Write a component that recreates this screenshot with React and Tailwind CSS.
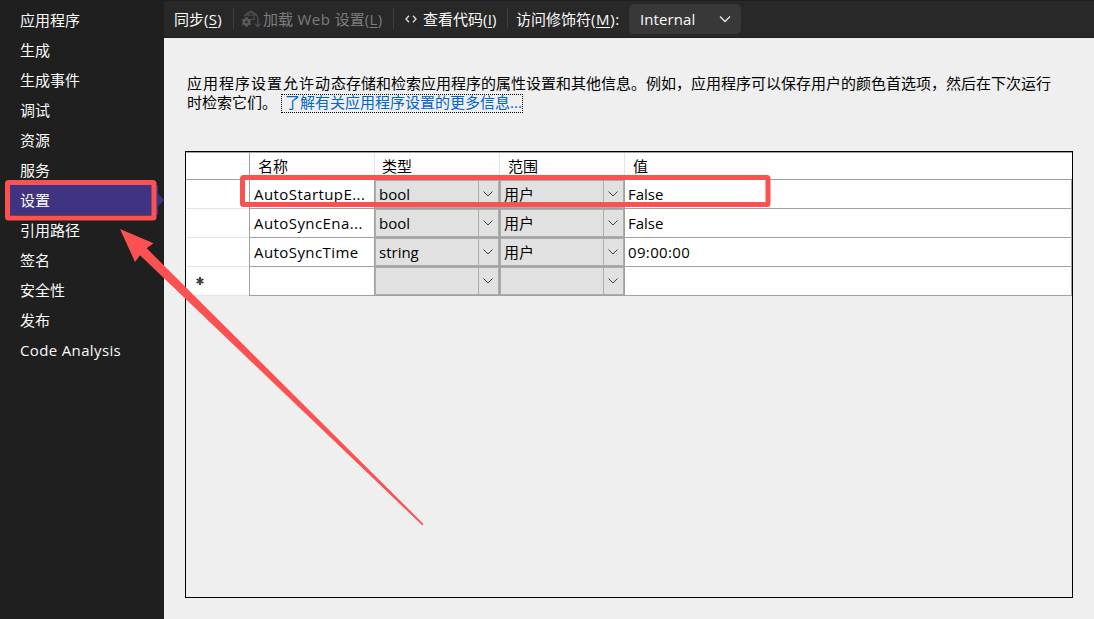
import React, { useState } from "react";

const menuItems = [
  "应用程序",
  "生成",
  "生成事件",
  "调试",
  "资源",
  "服务",
  "设置",
  "引用路径",
  "签名",
  "安全性",
  "发布",
  "Code Analysis",
];

const settings = [
  { name: "AutoStartupE...", type: "bool", scope: "用户", value: "False" },
  { name: "AutoSyncEna...", type: "bool", scope: "用户", value: "False" },
  { name: "AutoSyncTime", type: "string", scope: "用户", value: "09:00:00" },
  { name: "", type: "", scope: "", value: "", isNew: true },
];

const Sidebar = ({ active, onSelect }) => (
  <nav className="w-[164px] shrink-0 bg-[#1f1f1f] pt-[5px] pl-[6px] text-[#fafafa]">
    {menuItems.map((item) => (
      <div
        key={item}
        onClick={() => onSelect(item)}
        className="flex h-[30px] cursor-default items-center"
      >
        <div
          className={`flex h-[30px] w-[152px] items-center pl-[14px] ${
            item === active ? "bg-[#403482]" : ""
          } ${item === "Code Analysis" ? "tracking-[0.36px]" : ""}`}
        >
          {item}
        </div>
        {item === active && (
          <svg width="6" height="12" viewBox="0 0 6 12">
            <path d="M0 0L6 6L0 12Z" fill="#403482" />
          </svg>
        )}
      </div>
    ))}
  </nav>
);

const Separator = () => <div className="h-[21px] w-px shrink-0 bg-[#3d3d3d]" />;

// Globe with a gear in front and a download arrow
const WebSettingsIcon = () => (
  <svg width="20" height="18" viewBox="0 0 20 18" fill="none" stroke="#505050" strokeWidth="1.1">
    <path d="M3.500 6.500A7 7 0 0 1 16.500 7" />
    <path d="M7 6.500C7.300 3.500 8.500 1 10 1S13 3.500 13.200 9M3.500 5H16.500M10 9.500H14" />
    <g stroke="#5c5c5c">
      <circle cx="5.500" cy="12" r="2.600" strokeWidth="2.400" />
      <path
        d="M5.500 7V9M5.500 15V17M1.200 9.500L2.900 10.500M8.100 13.500L9.800 14.500M9.800 9.500L8.100 10.500M2.900 13.500L1.200 14.500"
        strokeWidth="2"
      />
    </g>
    <path d="M16.800 7.500V16.500M14 13.800L16.800 16.600L19.500 13.800" strokeWidth="1.300" />
  </svg>
);

const Toolbar = () => (
  <div className="flex h-[38px] shrink-0 items-center border-t border-b border-[#1f1f1f] bg-[#282828] pb-px text-[#fafafa]">
    <div className="w-[69px] pl-[10px] whitespace-nowrap">
      同步<span className="tracking-[0.3px]">(<u className="underline-offset-2">S</u>)</span>
    </div>
    <Separator />
    <div className="flex w-[159px] items-center pl-[7px] whitespace-nowrap text-[#7d7d7d]">
      <WebSettingsIcon />
      <span className="pl-[2px]">
        加载<span className="tracking-[0.5px]"> Web </span>设置
        <span className="tracking-[0.3px]">(<u className="underline-offset-2">L</u>)</span>
      </span>
    </div>
    <Separator />
    <div className="flex w-[113px] items-center pl-[11px] whitespace-nowrap">
      <svg width="12" height="8" viewBox="0 0 12 8" fill="none" stroke="#d6d6d6" strokeWidth="1.400">
        <path d="M4 0.700L1 4L4 7.300M8 0.700L11 4L8 7.300" />
      </svg>
      <span className="pl-[6px]">
        查看代码<span className="tracking-[0.2px]">(<u className="underline-offset-2">I</u>)</span>
      </span>
    </div>
    <Separator />
    <div className="w-[121px] pl-2 whitespace-nowrap">
      访问修饰符<span className="tracking-[0.6px]">(<u className="underline-offset-2">M</u>):</span>
    </div>
    <div className="flex h-[30px] w-[112px] items-center justify-between rounded-[5px] bg-[#383838] pr-[10px] pl-[11px]">
      <span className="tracking-[0.1px]">Internal</span>
      <svg width="12" height="8" viewBox="0 0 12 8" fill="none" stroke="#e8e8e8" strokeWidth="1.300">
        <path d="M1 1.500L6 6.500L11 1.500" />
      </svg>
    </div>
  </div>
);

const ComboCell = ({ value }) => (
  <div className="flex h-[29px] w-[125px] shrink-0 border-r border-b border-[#a0a0a0]">
    <div className="flex w-[124px] border border-[#adadad] bg-[#e1e1e1]">
      <div className="flex flex-1 items-center pl-[3px]">{value}</div>
      <div className="flex w-5 items-center border-l border-[#adadad] pl-1">
        <svg width="10" height="6" viewBox="0 0 10 6" fill="none" stroke="#404040" strokeWidth="1">
          <path d="M0.500 0.500L5 5L9.500 0.500" />
        </svg>
      </div>
    </div>
  </div>
);

const SettingsGrid = () => (
  <div className="h-[447px] w-[888px] border border-black">
    {/* Header row */}
    <div className="flex h-7 border-t border-b border-[#a0a0a0] bg-white">
      <div className="w-[64px] border-r border-[#a0a0a0]" />
      <div className="flex w-[125px] items-center border-r border-[#e5e5e5] pl-2">名称</div>
      <div className="flex w-[125px] items-center border-r border-[#e5e5e5] pl-[7px]">类型</div>
      <div className="flex w-[125px] items-center border-r border-[#e5e5e5] pl-2">范围</div>
      <div className="flex flex-1 items-center pl-2">值</div>
    </div>

    {settings.map((row, i) => (
      <div key={i} className="flex h-[29px] bg-white">
        <div className="flex w-[64px] shrink-0 border-r border-[#a0a0a0]">
          <div className="flex flex-1 items-center border-b border-[#e5e5e5] pl-[10px]">
            {row.isNew && (
              <svg width="8" height="8" viewBox="0 0 8 8" stroke="#404040" strokeWidth="2">
                <path d="M4 0V8M0.700 2L7.300 6M7.300 2L0.700 6" />
              </svg>
            )}
          </div>
        </div>
        <div className="flex w-[125px] shrink-0 items-center border-r border-b border-[#a0a0a0] pl-1 tracking-[0.42px] whitespace-nowrap">
          {row.name}
        </div>
        <ComboCell value={row.type} />
        <ComboCell value={row.scope} />
        <div
          className={`flex flex-1 items-center border-r border-b border-[#a0a0a0] pl-[3px] ${
            row.type === "string" ? "tracking-[0.35px]" : ""
          }`}
        >
          {row.value}
        </div>
      </div>
    ))}
  </div>
);

// Red boxes and arrow drawn over the window
const Annotations = () => (
  <svg
    className="pointer-events-none absolute top-0 left-0"
    width="1094"
    height="619"
    viewBox="0 0 1094 619"
  >
    <rect x="7.500" y="182.500" width="146.500" height="35.500" rx="1" fill="none" stroke="#fb5151" strokeWidth="5" />
    <rect x="242.500" y="177.500" width="525.500" height="27" rx="1" fill="none" stroke="#fb5151" strokeWidth="5" />
    <path d="M120 229L153.500 243.300L146.700 248.300L423.500 524L422.500 525.500L140 255.300L135 262Z" fill="#fb5151" />
  </svg>
);

const App = () => {
  const [active, setActive] = useState("设置");

  return (
    <div className="relative flex h-[619px] w-[1094px] overflow-hidden bg-[#efefef] font-['Open_Sans','Noto_Sans_CJK_SC',sans-serif] text-[15px] leading-5">
      <Sidebar active={active} onSelect={setActive} />
      <div className="flex flex-1 flex-col">
        <Toolbar />
        <main className="flex flex-1 flex-col pt-[35px] pl-[21px] text-black">
          <div className="pl-[2px] whitespace-nowrap">
            <p className="h-[21px]">
              <span className="tracking-[1px]">应用程序设置允许动</span>
              态存储和检索应用程序的属性设置和其他信息。例如，应用程序可以保存用户的颜色首选项，然后在下次运行
            </p>
            <div className="flex h-[19px] leading-4">
              <span className="w-[94px]">时检索它们。</span>
              <a className="h-[19px] w-[242px] border border-dotted border-black pl-[3px] leading-[14px] text-[#0066cc]">
                了解有关应用程序设置的更多信息...
              </a>
            </div>
          </div>
          <div className="pt-[38px]">
            <SettingsGrid />
          </div>
        </main>
      </div>
      <Annotations />
    </div>
  );
};

export default App;
